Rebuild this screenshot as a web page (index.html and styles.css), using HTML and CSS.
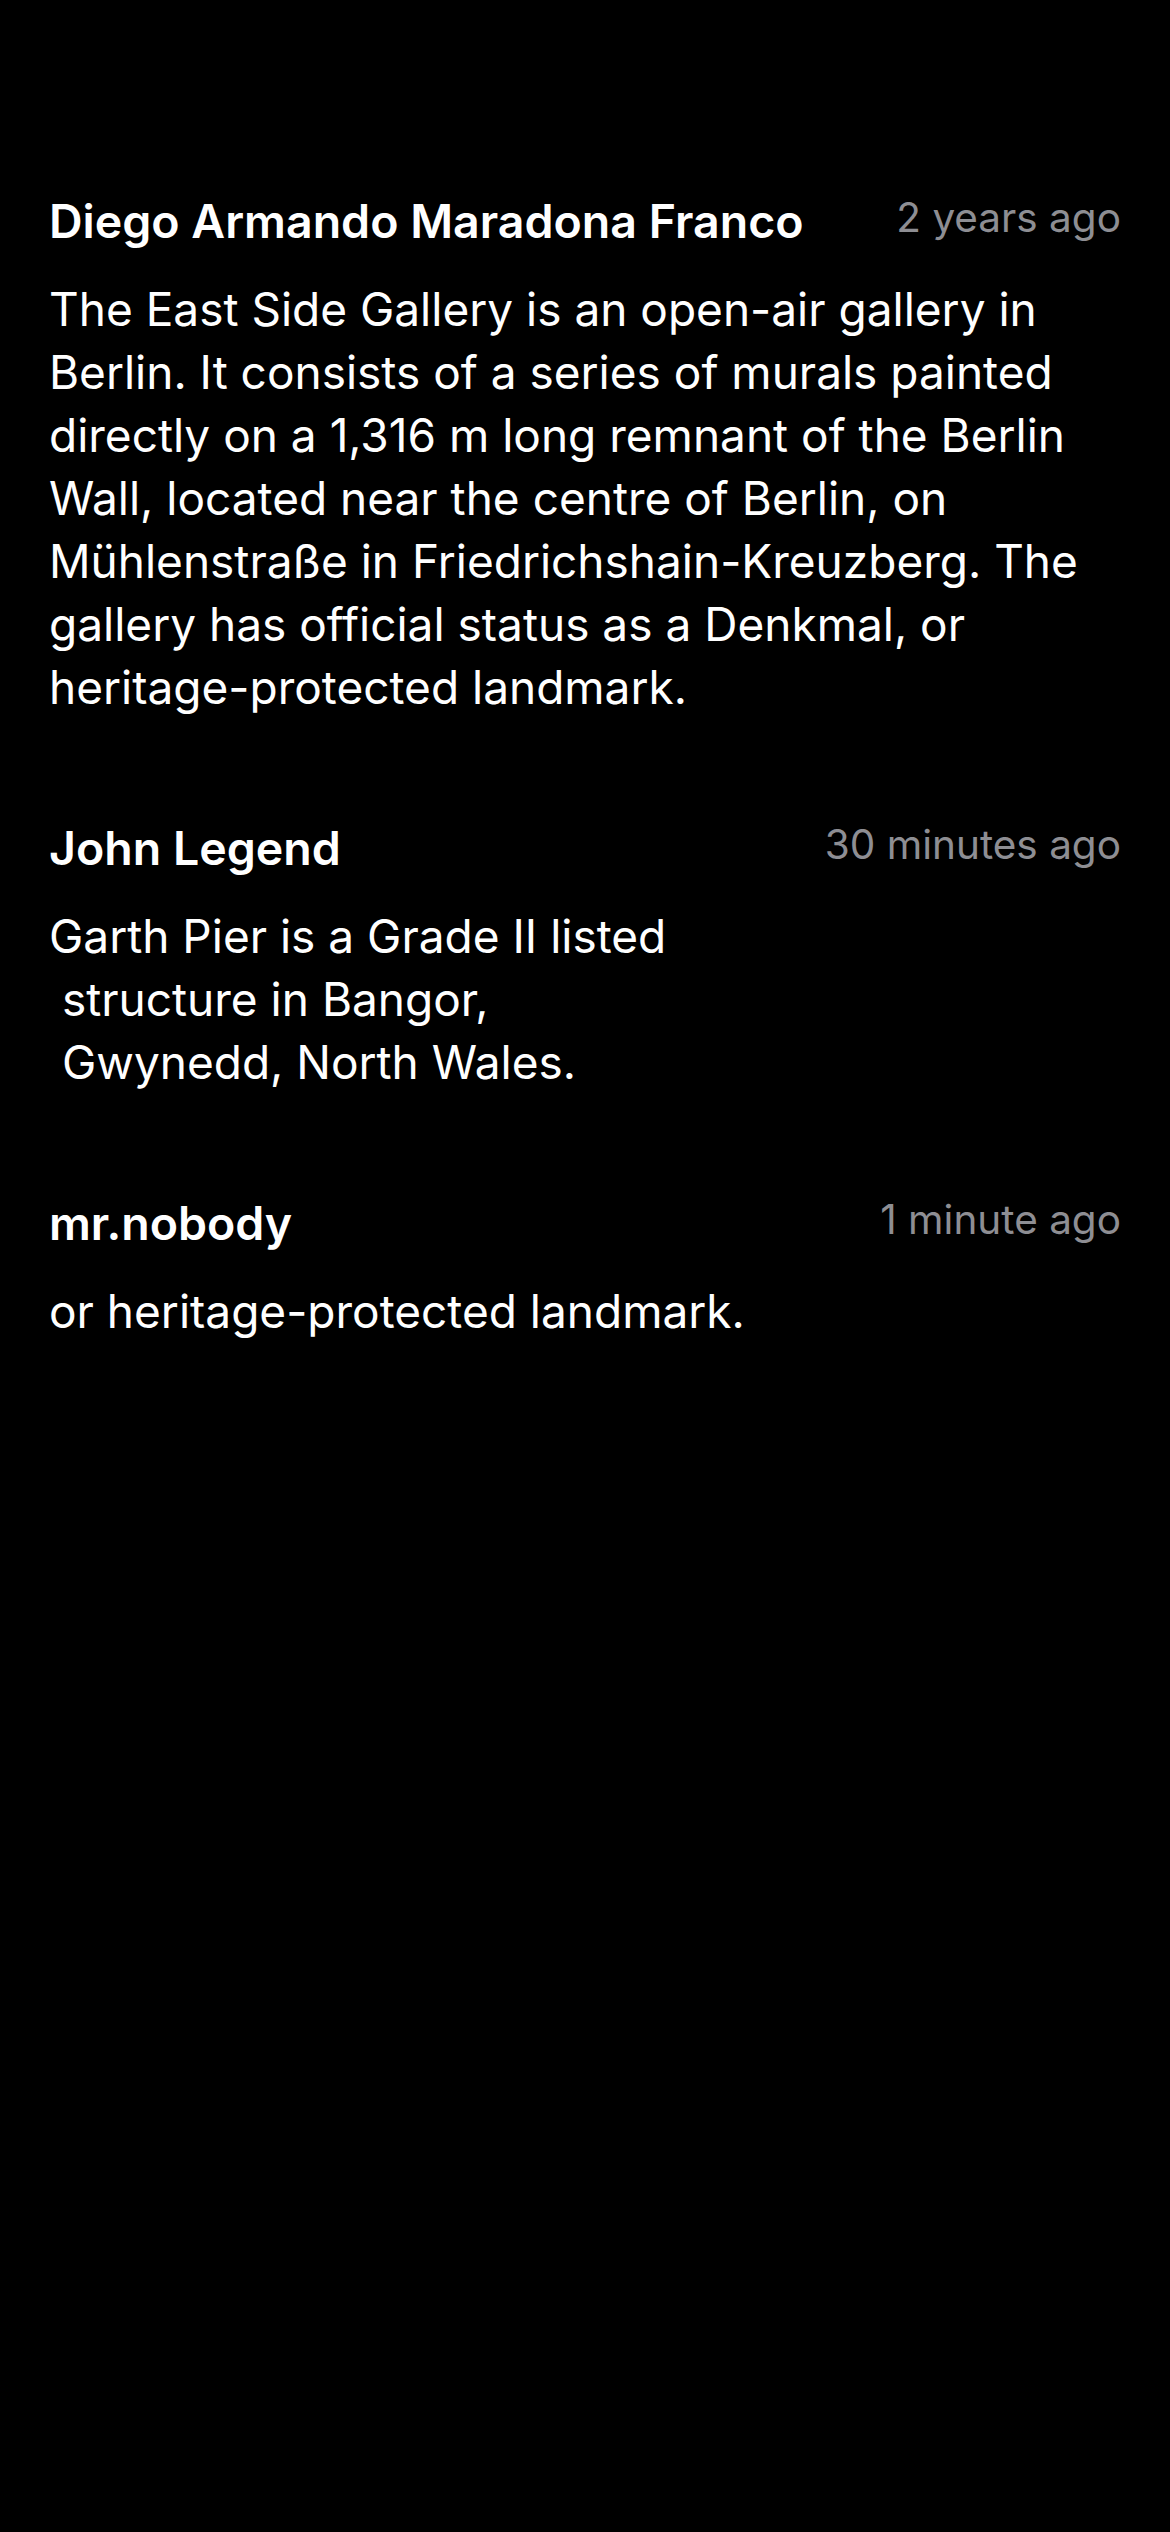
FILE: index.html
```html
<!DOCTYPE html>
<html lang="en">
<head>
<meta charset="utf-8">
<title>Comments</title>
<link rel="stylesheet" href="styles.css">
</head>
<body>
<main class="comments">
  <article class="comment">
    <header class="comment-head">
      <span class="name">Diego Armando Maradona Franco</span>
      <span class="time">2 years ago</span>
    </header>
    <p class="text">The East Side Gallery is an open-air gallery in Berlin. It consists of a series of murals painted directly on a 1,316 m long remnant of the Berlin Wall, located near the centre of Berlin, on Mühlenstraße in Friedrichshain-Kreuzberg. The gallery has official status as a Denkmal, or heritage-protected landmark.</p>
  </article>
  <article class="comment">
    <header class="comment-head">
      <span class="name">John Legend</span>
      <span class="time">30 minutes ago</span>
    </header>
    <p class="text pre">Garth Pier is a Grade II listed
 structure in Bangor,
 Gwynedd, North Wales.</p>
  </article>
  <article class="comment">
    <header class="comment-head">
      <span class="name">mr.nobody</span>
      <span class="time">1 minute ago</span>
    </header>
    <p class="text">or heritage-protected landmark.</p>
  </article>
</main>
</body>
</html>
```
FILE: styles.css
```css
html, body {
  margin: 0;
  padding: 0;
  background: #000;
}
body {
  width: 1170px;
  min-height: 2532px;
  color: #fff;
  font-family: Inter, "Noto Sans", "Liberation Sans", sans-serif;
}
.comments {
  display: flex;
  flex-direction: column;
  gap: 100px;
  padding: 192px 49px 0 49px;
}
.comment {
  display: flex;
  flex-direction: column;
  gap: 28px;
}
.comment-head {
  display: flex;
  justify-content: space-between;
  align-items: flex-start;
  gap: 40px;
}
.name {
  font-size: 46.5px;
  font-weight: 600;
  line-height: 58px;
}
.time {
  font-size: 40.5px;
  line-height: 52px;
  color: #8e8e93;
  white-space: nowrap;
}
.text {
  margin: 0;
  font-size: 46px;
  line-height: 63px;
}
.pre {
  white-space: pre-wrap;
}
```
